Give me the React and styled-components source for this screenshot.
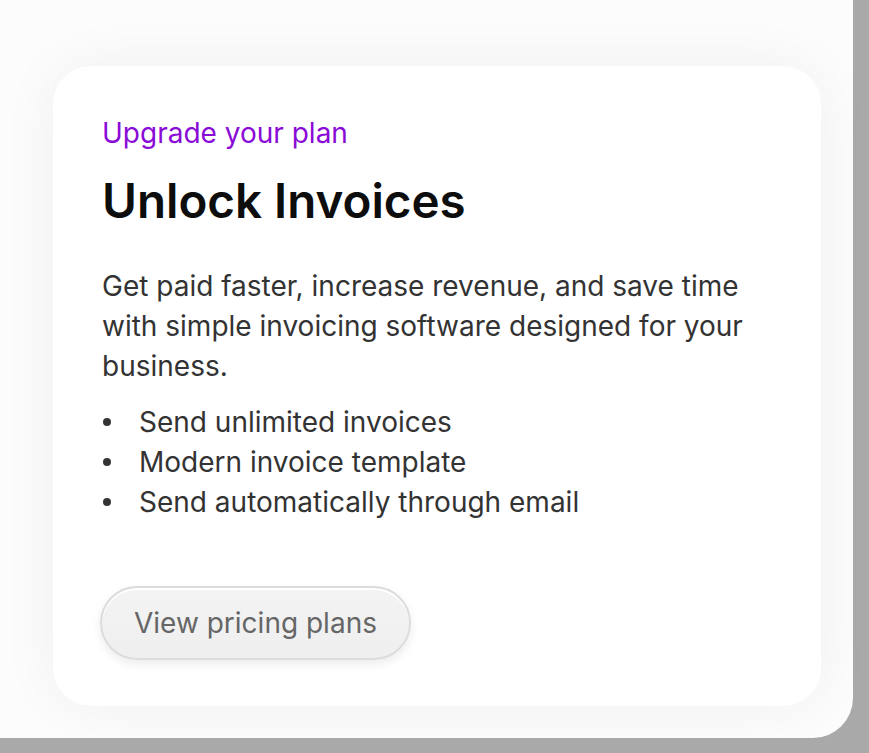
import React from 'react';
import styled, { createGlobalStyle } from 'styled-components';

const GlobalStyle = createGlobalStyle`
  html, body {
    margin: 0;
    padding: 0;
    background: #a9a9a9;
  }
  body {
    font-family: Inter, "Noto Sans", sans-serif;
  }
`;

const Panel = styled.div`
  width: 853px;
  height: 738px;
  box-sizing: border-box;
  padding: 66px 32px 0 53px;
  background: #fcfcfc;
  border-bottom-right-radius: 40px;
`;

const Card = styled.section`
  width: 768px;
  height: 640px;
  box-sizing: border-box;
  padding: 47px 48px 46px 49px;
  background: #ffffff;
  border-radius: 38px;
  box-shadow: 0 0 60px rgba(0, 0, 0, 0.05);
  display: flex;
  flex-direction: column;
`;

const Eyebrow = styled.div`
  font-size: 28px;
  line-height: 40px;
  color: #8a0bd6;
`;

const Heading = styled.h1`
  margin: 20px 0 0;
  font-size: 47.5px;
  font-weight: 600;
  line-height: 56px;
  color: #0d0d0d;
`;

const Description = styled.p`
  margin: 37px 0 16px;
  font-size: 28px;
  line-height: 40px;
  color: #333333;
`;

const Features = styled.ul`
  margin: 0;
  padding: 0;
  list-style: none;
  font-size: 28px;
  line-height: 40px;
  color: #333333;
`;

const Feature = styled.li`
  display: flex;
  align-items: center;

  &::before {
    content: '';
    flex: none;
    width: 8px;
    height: 8px;
    margin: 0 28px 0 1px;
    border-radius: 50%;
    background: #333333;
  }
`;

const Button = styled.button`
  align-self: flex-start;
  margin: auto 0 0 -2px;
  height: 74px;
  padding: 0 32px;
  border-radius: 37px;
  border: 2px solid #dcdcdc;
  background: linear-gradient(#f3f3f3, #efefef);
  box-shadow: inset 0 2px 0 #ffffff, 0 4px 10px rgba(0, 0, 0, 0.08);
  font-family: Inter, "Noto Sans", sans-serif;
  font-size: 28px;
  color: #666666;
  cursor: pointer;
`;

const features = [
  'Send unlimited invoices',
  'Modern invoice template',
  'Send automatically through email',
];

export default function App() {
  return (
    <>
      <GlobalStyle />
      <Panel>
        <Card>
          <Eyebrow>Upgrade your plan</Eyebrow>
          <Heading>Unlock Invoices</Heading>
          <Description>
            Get paid faster, increase revenue, and save time with simple invoicing
            software designed for your business.
          </Description>
          <Features>
            {features.map((f) => (
              <Feature key={f}>{f}</Feature>
            ))}
          </Features>
          <Button>View pricing plans</Button>
        </Card>
      </Panel>
    </>
  );
}
